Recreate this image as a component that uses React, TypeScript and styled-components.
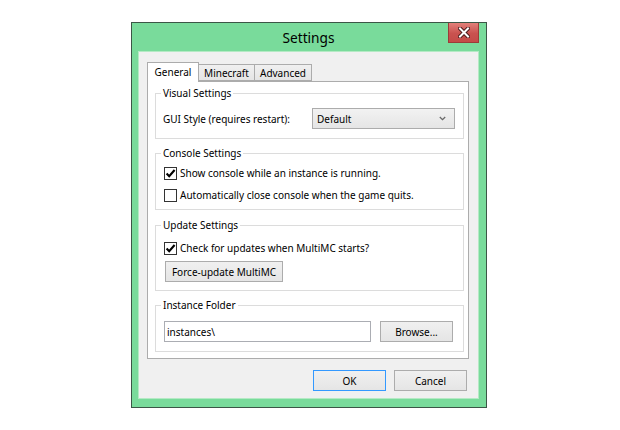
import React from "react";
import styled, { createGlobalStyle } from "styled-components";

const Global = createGlobalStyle`
  html, body { margin: 0; padding: 0; background: #ffffff; }
  body {
    font-family: "Noto Sans", "Open Sans", sans-serif;
    font-size: 10px;
    color: #000;
  }
  * { box-sizing: border-box; }
`;

const Page = styled.div`
  padding: 22px 0 0 131px;
  white-space: nowrap;
`;

const Window = styled.div`
  width: 356px;
  border: 1px solid #3b5646;
  background: #79db9b;
  display: flex;
  flex-direction: column;
  padding: 0 7px 8px 6px;
`;

const TitleBar = styled.div`
  height: 28px;
  display: grid;
  grid-template-columns: 1fr auto 1fr;
  align-items: center;
`;

const Title = styled.div`
  grid-column: 2;
  font-size: 13.7px;
  color: #000;
  line-height: 20px;
  padding-top: 2px;
`;

const CloseButton = styled.div`
  grid-column: 3;
  justify-self: end;
  align-self: start;
  width: 31px;
  height: 20px;
  border: 1px solid #9c3b39;
  border-top: none;
  background: linear-gradient(#e28079, #c9524f 55%, #c44b48);
  display: flex;
  align-items: center;
  justify-content: center;
`;

const Client = styled.div`
  height: 348px;
  background: #f0f0f0;
  border: 1px solid #b4eac4;
  padding: 10px 9px 7px 8px;
  display: flex;
  flex-direction: column;
`;

const TabBar = styled.div`
  display: flex;
  align-items: flex-end;
  height: 19px;
  position: relative;
  z-index: 1;
`;

const Tab = styled.div<{ $active?: boolean; $w: number }>`
  width: ${(p) => p.$w}px;
  height: ${(p) => (p.$active ? 20 : 17)}px;
  margin-bottom: ${(p) => (p.$active ? -1 : 0)}px;
  margin-left: -1px;
  &:first-child { margin-left: 0; }
  border: 1px solid #acacac;
  border-bottom: ${(p) => (p.$active ? "none" : "1px solid #acacac")};
  background: ${(p) => (p.$active ? "#ffffff" : "linear-gradient(#f0f0f0, #e5e5e5)")};
  display: flex;
  align-items: center;
  justify-content: center;
  line-height: 16px;
  padding-bottom: ${(p) => (p.$active ? 2 : 0)}px;
`;

const Pane = styled.div`
  width: 322px;
  height: 279px;
  border: 1px solid #acacac;
  background: #ffffff;
  padding: 3px 4px 0 7px;
  display: flex;
  flex-direction: column;
  gap: 6px;
`;

const Group = styled.fieldset<{ $pt: number; $pb: number; $mt?: number }>`
  margin: ${(p) => p.$mt ?? 0}px 0 0 0;
  min-width: 0;
  border: 1px solid #dcdcdc;
  padding: ${(p) => p.$pt}px 8px ${(p) => p.$pb}px 7px;
  display: flex;
  flex-direction: column;
`;

const Legend = styled.legend`
  padding: 0 2px;
  margin-left: -2px;
  line-height: 16px;
  font-size: 10px;
`;

const Row = styled.div`
  display: flex;
  align-items: center;
`;

const Label = styled.span`
  flex: 1;
`;

const Combo = styled.div`
  width: 143px;
  height: 21px;
  border: 1px solid #acacac;
  background: linear-gradient(#f2f2f2, #e5e5e5);
  display: flex;
  align-items: center;
  justify-content: space-between;
  padding: 0 8px 0 4px;
`;

const CheckRow = styled.div`
  height: 22px;
  display: flex;
  align-items: center;
  gap: 3px;
  padding-left: 1px;
`;

const Box = styled.div`
  width: 13px;
  height: 13px;
  border: 1px solid #333333;
  background: #ffffff;
  display: flex;
  align-items: center;
  justify-content: center;
`;

const Button = styled.div<{ $w: number; $default?: boolean }>`
  width: ${(p) => p.$w}px;
  height: 21px;
  border: 1px solid ${(p) => (p.$default ? "#3399ff" : "#acacac")};
  background: linear-gradient(#f0f0f0, #e5e5e5);
  display: flex;
  align-items: center;
  justify-content: center;
  flex-shrink: 0;
`;

const SideButton = styled(Button)`
  margin-left: 2px;
  margin-top: 2px;
`;

const TextInput = styled.div`
  width: 207px;
  height: 21px;
  margin-left: 1px;
  border: 1px solid #abadb3;
  background: #ffffff;
  display: flex;
  align-items: center;
  padding-left: 2px;
`;

const InputRow = styled.div`
  display: flex;
  align-items: center;
  gap: 9px;
`;

const Footer = styled.div`
  display: flex;
  justify-content: flex-end;
  gap: 8px;
  margin-top: 11px;
  padding-right: 2px;
`;

const Check = ({ checked }: { checked?: boolean }) => (
  <Box>
    {checked && (
      <svg width="11" height="11" viewBox="0 0 11 11">
        <path d="M1.6 5.6 L4.2 8.3 L9.6 2" fill="none" stroke="#000" strokeWidth="2.1" />
      </svg>
    )}
  </Box>
);

export default function App() {
  return (
    <>
      <Global />
      <Page>
        <Window>
          <TitleBar>
            <Title>Settings</Title>
            <CloseButton>
              <svg width="12" height="11" viewBox="0 0 12 11">
                <path d="M2 1.5 L10 9.5 M10 1.5 L2 9.5" stroke="#4a1a1a" strokeWidth="4" strokeLinecap="square" />
                <path d="M2 1.5 L10 9.5 M10 1.5 L2 9.5" stroke="#ffffff" strokeWidth="2" strokeLinecap="square" />
              </svg>
            </CloseButton>
          </TitleBar>
          <Client>
            <TabBar>
              <Tab $active $w={52}>General</Tab>
              <Tab $w={57}>Minecraft</Tab>
              <Tab $w={58}>Advanced</Tab>
            </TabBar>
            <Pane>
              <Group $pt={7} $pb={9}>
                <Legend>Visual Settings</Legend>
                <Row>
                  <Label>GUI Style (requires restart):</Label>
                  <Combo>
                    <span>Default</span>
                    <svg width="7" height="5" viewBox="0 0 7 5">
                      <path d="M0.8 1 L3.5 3.7 L6.2 1" fill="none" stroke="#6a6a6a" strokeWidth="1.3" />
                    </svg>
                  </Combo>
                </Row>
              </Group>
              <Group $pt={1} $pb={3}>
                <Legend>Console Settings</Legend>
                <CheckRow>
                  <Check checked />
                  <span>Show console while an instance is running.</span>
                </CheckRow>
                <CheckRow>
                  <Check />
                  <span>Automatically close console when the game quits.</span>
                </CheckRow>
              </Group>
              <Group $pt={4} $pb={8} $mt={1}>
                <Legend>Update Settings</Legend>
                <CheckRow>
                  <Check checked />
                  <span>Check for updates when MultiMC starts?</span>
                </CheckRow>
                <SideButton $w={118}>Force-update MultiMC</SideButton>
              </Group>
              <Group $pt={8} $pb={9}>
                <Legend>Instance Folder</Legend>
                <InputRow>
                  <TextInput>instances\</TextInput>
                  <Button $w={73}>Browse...</Button>
                </InputRow>
              </Group>
            </Pane>
            <Footer>
              <Button $w={73} $default>OK</Button>
              <Button $w={73}>Cancel</Button>
            </Footer>
          </Client>
        </Window>
      </Page>
    </>
  );
}
